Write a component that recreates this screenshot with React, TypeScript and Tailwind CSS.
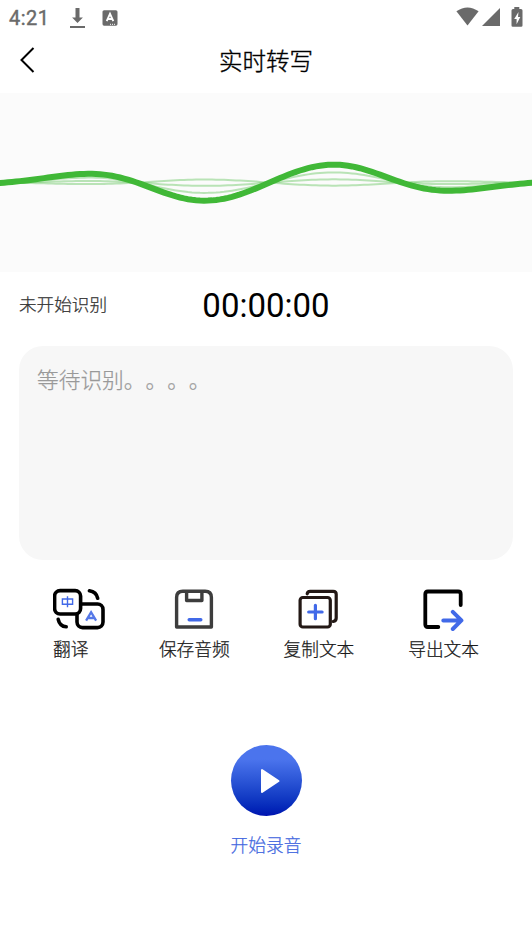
import type { ReactNode } from "react";

const MAIN_AMP = 18.3;

// Sine wave that fades out towards both edges
function wavePath(scale: number) {
  const points: string[] = [];
  for (let x = -4; x <= 536; x += 4) {
    const u = (x - 266) / 133;
    const fade = Math.pow(4 / (4 + Math.pow(u, 4)), 1.1);
    const y = 89.6 - MAIN_AMP * scale * fade * Math.sin(((x - 269.5) / 132.5) * Math.PI);
    points.push(`${x} ${y.toFixed(2)}`);
  }
  return "M" + points.join("L");
}

function StatusBar() {
  return (
    <div className="flex h-9 items-center pl-[9px] pr-[9px] text-[#6a6a6a]">
      <span className="w-[60px] font-['Roboto',sans-serif] text-[20px] font-normal leading-9 tracking-[0.5px] [-webkit-text-stroke:0.4px_#6a6a6a]">4:21</span>
      <svg className="h-[22px] w-4" viewBox="0 0 16 22" fill="currentColor">
        <path d="M6.5 1h4v9.5h3.4L8.5 16 3.1 10.5h3.4zM1 19h15v2H1z" />
      </svg>
      <svg className="ml-[17px] h-4 w-4" viewBox="0 0 16 16">
        <rect x="0.5" y="0.2" width="15" height="15.5" rx="1.6" fill="currentColor" />
        <path d="M4.7 11.2 8 3.8l3.3 7.4M5.9 9h4.2" fill="none" stroke="#fff" strokeWidth="1.9" />
        <path d="M8 14.3h6" stroke="#fff" strokeWidth="1" strokeDasharray="1 1" />
      </svg>
      <div className="ml-auto flex items-start pb-[2px]">
        <svg className="h-5 w-[23px]" viewBox="0 0 23 20" fill="currentColor">
          <path d="M.4 4.3Q11.5-3.5 22.6 4.3L11.5 18.4z" />
        </svg>
        <svg className="ml-[3px] h-5 w-[18px]" viewBox="0 0 18 20" fill="currentColor">
          <path d="M18 1v18H0z" />
        </svg>
        <svg className="ml-[11px] h-5 w-3" viewBox="0 0 12 20">
          <path d="M3.3 0h5v2H10q1.5 0 1.5 1.5v15q0 1.2-1.3 1.2H1.8Q.5 19.7.5 18.5v-15Q.5 2 2 2h1.3z" fill="currentColor" />
          <path d="M7.5 5 3.2 12h2.4v5.2L9.3 10H7z" fill="#fff" />
        </svg>
      </div>
    </div>
  );
}

function Action({ label, children, start }: { label: string; children: ReactNode; start?: boolean }) {
  return (
    <button className={start ? "flex flex-col items-start" : "flex flex-col items-center"}>
      {children}
      <span className="mt-[5px] whitespace-nowrap text-[17.7px] leading-[25px] text-[#1a1a1a]">{label}</span>
    </button>
  );
}

export default function App() {
  return (
    <div className="flex h-[947px] w-[532px] flex-col overflow-hidden bg-white font-['Noto_Sans_CJK_SC',sans-serif] font-light [-webkit-text-stroke:0.25px_currentColor]">
      <StatusBar />

      <header className="grid h-[57px] grid-cols-[60px_1fr_60px] items-center pb-[9px]">
        <svg className="ml-[19px] h-7 w-4" viewBox="0 0 16 28" fill="none" stroke="#000" strokeWidth="2">
          <path d="M14.5 2 2.5 14l12 12" />
        </svg>
        <h1 className="text-center text-[23.5px] font-light leading-9 text-black [-webkit-text-stroke:0.4px_#000]">实时转写</h1>
      </header>

      {/* Waveform */}
      <div className="h-[179px] bg-[#fbfbfb]">
        <svg className="h-full w-full" viewBox="0 0 532 179" fill="none" stroke="#40b837">
          <path d={wavePath(-0.17)} strokeWidth="2" strokeOpacity="0.35" />
          <path d={wavePath(0.18)} strokeWidth="2" strokeOpacity="0.35" />
          <path d={wavePath(0.57)} strokeWidth="2" strokeOpacity="0.35" />
          <path d={wavePath(1)} strokeWidth="6" />
        </svg>
      </div>

      <div className="grid h-[74px] grid-cols-[1fr_auto_1fr] items-center px-[19px]">
        <span className="pb-[9px] text-[17.6px] text-[#333]">未开始识别</span>
        <span className="pb-[6px] font-['Roboto',sans-serif] text-[33px] font-normal leading-10 text-black [-webkit-text-stroke:0]">00:00:00</span>
      </div>

      {/* Transcript */}
      <div className="mx-[19px] h-[214px] rounded-[24px] bg-[#f7f7f7] px-[18px] pt-[17px] text-[21.7px] leading-8 text-[#999] [text-spacing-trim:space-all]">
        等待识别。。。。
      </div>

      <div className="mt-[28px] flex justify-between px-[53px]">
        <Action label="翻译" start>
          <svg className="h-[43px] w-[52px]" viewBox="0.6 0.2 52 43" fill="none" stroke="#000" strokeWidth="3.6" strokeLinecap="round">
            <rect x="24.6" y="16.2" width="26" height="23.6" rx="5.5" />
            <rect x="2.2" y="2.8" width="26" height="23.4" rx="5.5" fill="#fff" />
            <path d="M37 3q7 1 8.3 7.5M5.8 31.5q1.5 7 8 7.5" />
            <path d="M10 11.2h10.2v5.2H10zM15.1 8.5v11" stroke="#4169e8" strokeWidth="1.4" strokeLinecap="butt" />
            <path d="M33.7 32.8 38.7 24.4l5 8.4M35.6 30.2h6.2" stroke="#5578e8" strokeWidth="2.3" strokeLinecap="butt" />
          </svg>
        </Action>
        <Action label="保存音频">
          <svg className="h-[43px] w-[42px]" viewBox="0 0 42 43" fill="none" stroke="#3d3d3d" strokeWidth="3.4">
            <path d="M3.6 39V9.5q0-6.2 6.2-6.2h22.4q6.2 0 6.2 6.2V39z" strokeLinejoin="round" />
            <path d="M13.6 4v8.5h15.3V4" strokeLinejoin="round" />
            <path d="M16.2 31.7h11.6" stroke="#4169e8" strokeLinecap="round" />
          </svg>
        </Action>
        <Action label="复制文本">
          <svg className="h-[43px] w-[42px]" viewBox="0.3 0 42 43" fill="none" stroke="#231815" strokeWidth="3.2" strokeLinecap="round">
            <path d="M9.5 5.8q.3-2.5 3-2.5h23q3 0 3 3V30q0 3-3 3.5" />
            <rect x="2.4" y="9.5" width="30.2" height="29.5" rx="2.8" />
            <path d="M17.7 17.3v13.4M11 24h13.4" stroke="#4169e8" />
          </svg>
        </Action>
        <Action label="导出文本">
          <svg className="h-[43px] w-[42px]" viewBox="1 0 42 43" fill="none" stroke="#000" strokeWidth="3.8" strokeLinecap="round" strokeLinejoin="round">
            <path d="M16.3 39H5.8q-2.5 0-2.5-2.5V6q0-2.5 2.5-2.5h30.4q2.5 0 2.5 2.5v11" />
            <path d="M21.3 32.4H39M30.8 23.8l8.6 8.6-8.6 8.6" stroke="#4169e8" strokeWidth="4" />
          </svg>
        </Action>
      </div>

      <button className="mt-[84px] flex flex-col items-center self-center">
        <span className="flex h-[71px] w-[71px] items-center justify-center rounded-full bg-linear-to-b from-[#4b74ed] from-20% to-[#0012b0] to-100%">
          <svg className="ml-[7px] h-[26px] w-5" viewBox="0 0 20 26" fill="#fff" stroke="#fff" strokeWidth="2" strokeLinejoin="round">
            <path d="M2 2v22l16.5-11z" />
          </svg>
        </span>
        <span className="mt-[15px] text-[17.7px] leading-[26px] text-[#4267e0]">开始录音</span>
      </button>
    </div>
  );
}
